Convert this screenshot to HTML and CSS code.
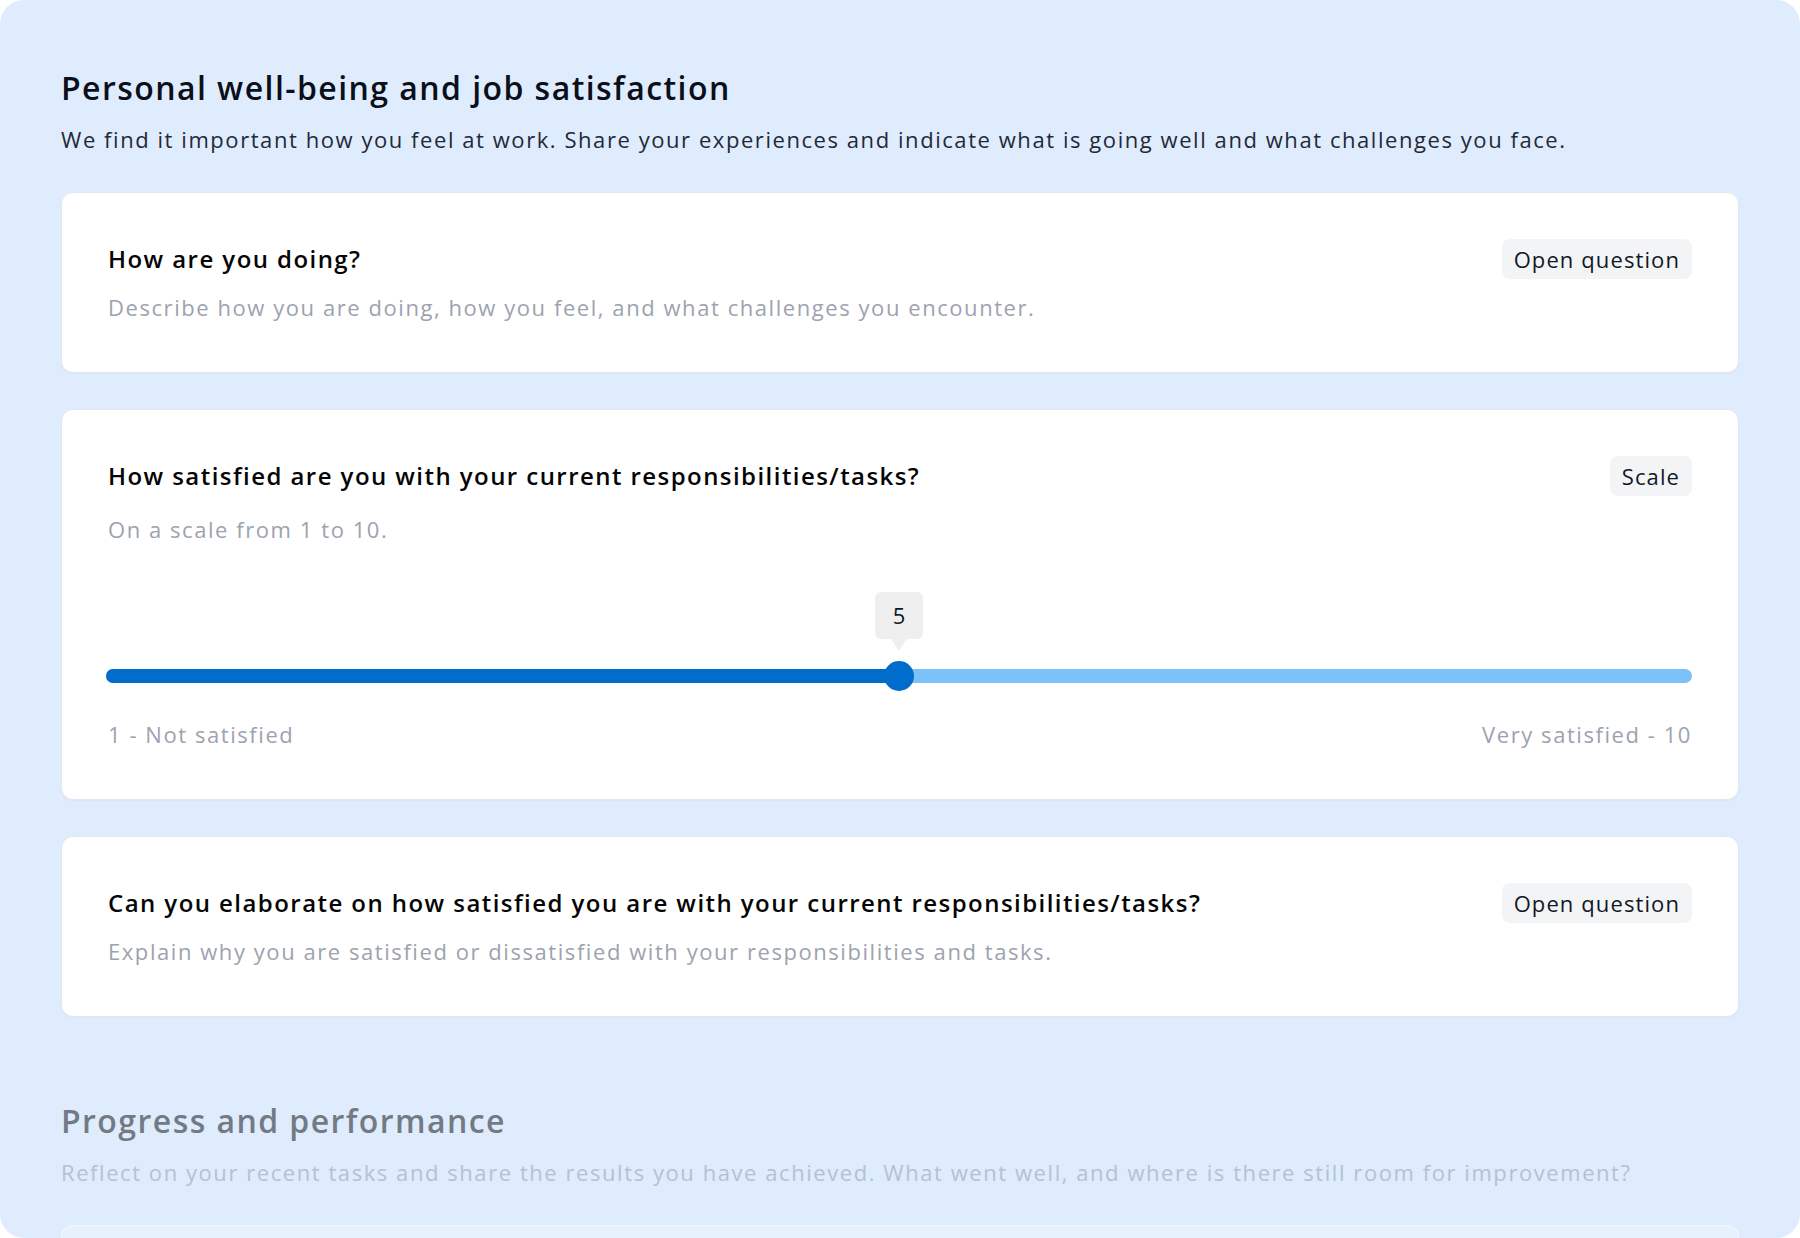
FILE: index.html
```html
<!DOCTYPE html>
<html lang="en">
<head>
    <meta charset="UTF-8">
    <meta name="viewport" content="width=device-width, initial-scale=1.0">
    <title>Survey</title>
    <link rel="stylesheet" href="styles.css">
</head>
<body>
    <div class="panel">
        <section class="section">
            <h1>Personal well-being and job satisfaction</h1>
            <p class="intro">We find it important how you feel at work. Share your experiences and indicate what is going well and what challenges you face.</p>

            <div class="card">
                <div class="card-head">
                    <h2>How are you doing?</h2>
                    <span class="badge">Open question</span>
                </div>
                <p class="hint">Describe how you are doing, how you feel, and what challenges you encounter.</p>
            </div>

            <div class="card">
                <div class="card-head">
                    <h2>How satisfied are you with your current responsibilities/tasks?</h2>
                    <span class="badge">Scale</span>
                </div>
                <p class="hint hint-scale">On a scale from 1 to 10.</p>
                <div class="slider">
                    <div class="track">
                        <div class="fill" style="width: 50%"></div>
                        <div class="thumb" style="left: 50%">
                            <span class="bubble">5</span>
                        </div>
                    </div>
                    <div class="scale-labels">
                        <span>1 - Not satisfied</span>
                        <span>Very satisfied - 10</span>
                    </div>
                </div>
            </div>

            <div class="card">
                <div class="card-head">
                    <h2>Can you elaborate on how satisfied you are with your current responsibilities/tasks?</h2>
                    <span class="badge">Open question</span>
                </div>
                <p class="hint">Explain why you are satisfied or dissatisfied with your responsibilities and tasks.</p>
            </div>
        </section>

        <section class="section section-next">
            <h1>Progress and performance</h1>
            <p class="intro">Reflect on your recent tasks and share the results you have achieved. What went well, and where is there still room for improvement?</p>
            <div class="card card-ghost"></div>
        </section>
    </div>
</body>
</html>
```

FILE: styles.css
```css
* {
    box-sizing: border-box;
}

body {
    margin: 0;
    background-color: #ffffff;
    font-family: 'Open Sans', 'Noto Sans', sans-serif;
    font-size: 22px;
    letter-spacing: 0.071em;
}

.panel {
    height: 100vh;
    overflow: hidden;
    background-color: #dfecfd;
    border-radius: 24px;
    padding: 68px 61px 0;
}

.section {
    display: flex;
    flex-direction: column;
    gap: 36px;
}

h1 {
    margin: 0;
    font-size: 32px;
    line-height: 40px;
    font-weight: 600;
    letter-spacing: 0.045em;
    color: #0b0f19;
}

.intro {
    margin: -21px 0 1px;
    line-height: 32px;
    color: #1f2937;
}

.card {
    background-color: #ffffff;
    border: 1px solid #e2e7ee;
    border-radius: 12px;
    padding: 46px 46px 49px;
    box-shadow: 0 1px 2px rgba(15, 23, 42, 0.03);
}

.card-head {
    display: flex;
    justify-content: space-between;
    align-items: center;
    height: 40px;
}

h2 {
    margin: 0;
    font-size: 24px;
    line-height: 36px;
    font-weight: 600;
    letter-spacing: 0.06em;
    color: #050505;
}

.badge {
    background-color: #f3f4f6;
    border-radius: 8px;
    padding: 0 12px;
    height: 40px;
    line-height: 40px;
    color: #111827;
    letter-spacing: 0.05em;
}

.hint {
    margin: 12px 0 0;
    line-height: 32px;
    color: #9ca3af;
}

.hint-scale {
    margin-top: 17px;
}

.slider {
    margin-top: 124px;
}

.track {
    position: relative;
    height: 14px;
    margin-left: -2px;
    border-radius: 7px;
    background-color: #7dc1fb;
}

.fill {
    height: 100%;
    border-radius: 7px;
    background-color: #006ccb;
}

.thumb {
    position: absolute;
    top: 50%;
    width: 30px;
    height: 30px;
    border-radius: 50%;
    background-color: #006ccb;
    transform: translate(-50%, -50%);
}

.bubble {
    position: absolute;
    bottom: calc(100% + 22px);
    left: 50%;
    transform: translateX(-50%);
    width: 48px;
    height: 47px;
    line-height: 47px;
    text-align: center;
    border-radius: 6px;
    background-color: #efefef;
    letter-spacing: 0;
    color: #111827;
}

.bubble::after {
    content: '';
    position: absolute;
    top: 100%;
    left: 50%;
    margin-left: -8px;
    border-left: 8px solid transparent;
    border-right: 8px solid transparent;
    border-top: 12px solid #efefef;
}

.scale-labels {
    display: flex;
    justify-content: space-between;
    margin-top: 35px;
    line-height: 32px;
    color: #9ca3af;
}

.section-next {
    margin-top: 84px;
}

.section-next h1 {
    color: #737a83;
}

.section-next .intro {
    color: #b6c1d0;
}

.card-ghost {
    height: 120px;
    background-color: rgba(255, 255, 255, 0.25);
    border-color: rgba(255, 255, 255, 0.5);
    box-shadow: none;
}
```
